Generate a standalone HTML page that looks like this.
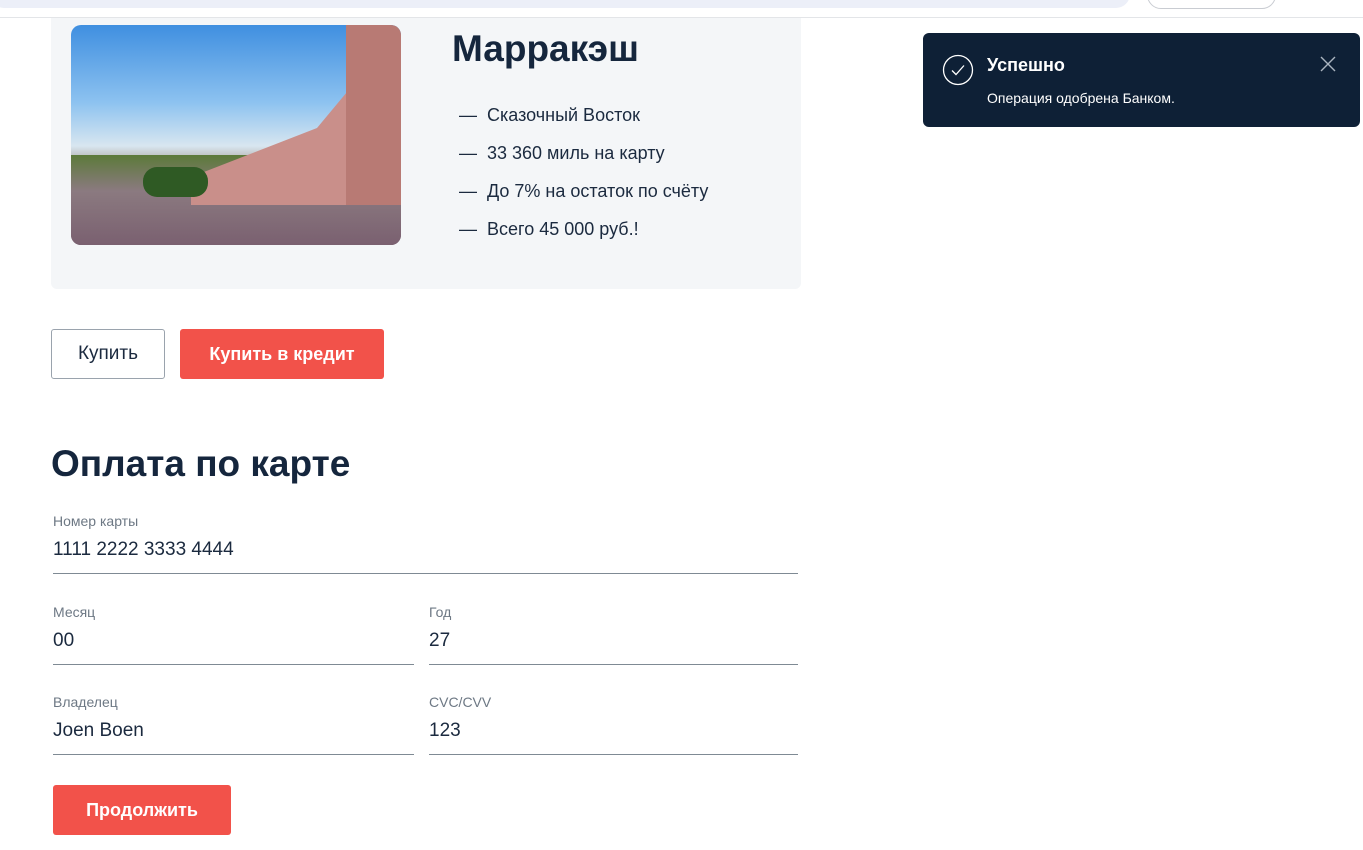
<!DOCTYPE html>
<html><head><meta charset="utf-8"><style>
*{margin:0;padding:0;box-sizing:border-box}
body{width:1363px;height:850px;overflow:hidden;background:#fff;font-family:"Liberation Sans","DejaVu Sans",sans-serif;color:#1b2a3f;position:relative}
.abs{position:absolute}
.bar{left:-10px;top:-20px;width:1140px;height:28px;background:#eceff8;border-radius:14px}
.btnt{left:1147px;top:-20px;width:129px;height:29px;border:1px solid #c9ccd2;border-radius:14px}
.line{left:0;top:17px;width:1363px;height:1px;background:#e3e5e8}
.card{left:51px;top:18px;width:750px;height:271px;background:#f4f6f8;border-radius:0 0 6px 6px}
.img{left:71px;top:25px;width:330px;height:220px;border-radius:10px;overflow:hidden;background:linear-gradient(180deg,#3f8fe0 0%,#8cc2f0 35%,#d8e6f0 55%,#8a7060 70%,#705a6a 100%)}
h1{position:absolute;left:452px;top:28px;font-size:37px;font-weight:bold;color:#15263d}
ul{position:absolute;left:459px;top:96px;list-style:none;font-size:18px;line-height:38px;color:#1b2a3f}
.b1{left:51px;top:329px;width:114px;height:50px;border:1px solid #9aa3ad;border-radius:3px;font-size:19px;text-align:center;line-height:48px}
.b2{left:180px;top:329px;width:204px;height:50px;background:#f2524a;border-radius:3px;color:#fff;font-weight:bold;font-size:18px;text-align:center;line-height:50px}
h2{position:absolute;left:51px;top:443px;font-size:37px;font-weight:bold;color:#15263d}
.lab{font-size:14px;color:#6d7884}
.val{font-size:19px;color:#1b2a3f;margin-top:10px}
.f{position:absolute;border-bottom:1px solid #7f8a94}
.b3{left:53px;top:785px;width:178px;height:50px;background:#f2524a;border-radius:3px;color:#fff;font-weight:bold;font-size:18px;text-align:center;line-height:50px}
.toast{left:923px;top:33px;width:437px;height:94px;background:#0e2036;border-radius:6px;color:#fff}
</style></head><body>
<div class="abs bar"></div><div class="abs btnt"></div><div class="abs line"></div>
<div class="abs card"></div>
<div class="abs img">
<div class="abs" style="left:0;top:130px;width:330px;height:90px;background:linear-gradient(180deg,#5c7a3a,#8b7a80 40%,#7a6070)"></div>
<div class="abs" style="left:120px;top:40px;width:210px;height:140px;background:#c98f8a;clip-path:polygon(0 80%,60% 45%,85% 0,100% 0,100% 100%,0 100%)"></div>
<div class="abs" style="left:275px;top:0;width:55px;height:180px;background:#b87a74"></div>
<div class="abs" style="left:72px;top:142px;width:65px;height:30px;background:#2f5a24;border-radius:14px"></div>
</div>
<h1>Марракэш</h1>
<ul><li>—&nbsp; Сказочный Восток</li><li>—&nbsp; 33 360 миль на карту</li><li>—&nbsp; До 7% на остаток по счёту</li><li>—&nbsp; Всего 45 000 руб.!</li></ul>
<div class="abs b1">Купить</div><div class="abs b2">Купить в кредит</div>
<h2>Оплата по карте</h2>
<div class="f" style="left:53px;top:513px;width:745px;height:61px"><div class="lab">Номер карты</div><div class="val">1111 2222 3333 4444</div></div>
<div class="f" style="left:53px;top:604px;width:361px;height:61px"><div class="lab">Месяц</div><div class="val">00</div></div>
<div class="f" style="left:429px;top:604px;width:369px;height:61px"><div class="lab">Год</div><div class="val">27</div></div>
<div class="f" style="left:53px;top:694px;width:361px;height:61px"><div class="lab">Владелец</div><div class="val">Joen Boen</div></div>
<div class="f" style="left:429px;top:694px;width:369px;height:61px"><div class="lab">CVC/CVV</div><div class="val">123</div></div>
<div class="abs b3">Продолжить</div>
<div class="abs toast">
<svg class="abs" style="left:19px;top:21px" width="32" height="32" viewBox="0 0 32 32"><circle cx="16" cy="16" r="14.5" fill="none" stroke="#fff" stroke-width="1.3"/><path d="M10 16.5l4 4 8-9" fill="none" stroke="#fff" stroke-width="1.3"/></svg>
<div class="abs" style="left:64px;top:22px;font-size:18px;font-weight:bold">Успешно</div>
<div class="abs" style="left:64px;top:57px;font-size:14px">Операция одобрена Банком.</div>
<svg class="abs" style="left:397px;top:23px" width="16" height="16" viewBox="0 0 16 16"><path d="M1 1l14 14M15 1L1 15" stroke="#aab4c0" stroke-width="1.4"/></svg>
</div>
</body></html>
